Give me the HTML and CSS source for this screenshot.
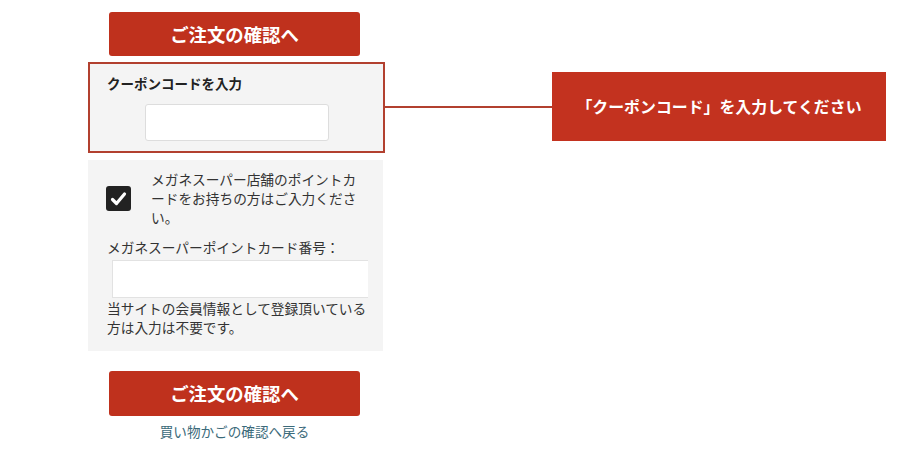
FILE: index.html
```html
<!DOCTYPE html>
<html lang="ja">
<head>
<meta charset="utf-8">
<link rel="stylesheet" href="styles.css">
</head>
<body>
<div class="page">
  <div class="column">
    <div class="btn-row"><button class="btn">ご注文の確認へ</button></div>
    <div class="coupon">
      <div class="coupon-label">クーポンコードを入力</div>
      <div class="coupon-input-row"><input class="coupon-input" type="text"></div>
      <div class="connector"></div>
      <div class="callout">「クーポンコード」を入力してください</div>
    </div>
    <div class="point">
      <div class="check-row">
        <span class="checkbox">
          <svg width="25" height="25" viewBox="0 0 25 25"><path d="M6.5 13.5 L10.5 17.5 L18.5 8" fill="none" stroke="#fff" stroke-width="3.2" stroke-linecap="round" stroke-linejoin="round"/></svg>
        </span>
        <span class="check-text">メガネスーパー店舗のポイントカードをお持ちの方はご入力ください。</span>
      </div>
      <div class="field-label">メガネスーパーポイントカード番号：</div>
      <div class="field-wrap"><input class="field-input" type="text"></div>
      <div class="note">当サイトの会員情報として登録頂いている方は入力は不要です。</div>
    </div>
    <div class="btn-row bottom"><button class="btn">ご注文の確認へ</button></div>
    <div class="back"><a href="#">買い物かごの確認へ戻る</a></div>
  </div>
</div>
</body>
</html>
```
FILE: styles.css
```css
html, body {
  margin: 0;
  padding: 0;
  background: #fff;
  font-family: "Noto Sans CJK JP", "Noto Sans", sans-serif;
  color: #222;
}
.page {
  width: 900px;
  height: 458px;
  overflow: hidden;
  padding-top: 12px;
  box-sizing: border-box;
}
.column {
  margin-left: 88px;
  width: 297px;
}
.btn-row {
  padding-left: 21px;
}
.btn {
  display: block;
  width: 251px;
  height: 44px;
  border: none;
  border-radius: 3px;
  background: #bf311d;
  color: #fff;
  font-family: "Noto Sans CJK JP", sans-serif;
  font-weight: 700;
  font-size: 18.4px;
  padding: 0;
  line-height: 44px;
}
.coupon {
  position: relative;
  margin-top: 6px;
  border: 2px solid #b2402f;
  background: #f4f4f4;
  padding: 10px 0 10px 17px;
}
.coupon-label {
  font-size: 13.5px;
  font-weight: 700;
  line-height: 19px;
  color: #222;
}
.coupon-input-row {
  margin-top: 11px;
  padding-left: 38px;
}
.coupon-input {
  display: block;
  box-sizing: border-box;
  width: 184px;
  height: 37px;
  border: 1px solid #ddd;
  border-radius: 3px;
  background: #fff;
  margin: 0;
}
.connector {
  position: absolute;
  left: 295px;
  top: 42px;
  width: 167px;
  height: 2px;
  background: #b2402f;
}
.callout {
  position: absolute;
  left: 462px;
  top: 8px;
  width: 334px;
  height: 69px;
  background: #c3321f;
  color: #fff;
  font-weight: 700;
  font-size: 15.9px;
  line-height: 69px;
  text-align: center;
}
.point {
  margin-top: 7px;
  width: 295px;
  background: #f4f4f4;
  padding: 10px 12px 14px 19px;
  box-sizing: border-box;
  font-size: 13.7px;
  line-height: 19px;
  color: #333;
}
.check-row {
  display: flex;
  align-items: center;
  gap: 20px;
}
.check-row .checkbox {
  flex: none;
  width: 25px;
  height: 25px;
  background: #222;
  border-radius: 3px;
  display: block;
  margin-left: -1px;
}
.checkbox svg { display: block; }
.check-text {
  width: 212px;
}
.field-label {
  margin-top: 11px;
}
.field-wrap {
  margin-top: 3px;
  padding-left: 5px;
}
.field-input {
  display: block;
  box-sizing: border-box;
  width: 256px;
  height: 38px;
  margin: 0;
  border: 1px solid #e2e2e2;
  border-right: none;
  background: #fff;
}
.note {
  margin-top: 1px;
}
.btn-row.bottom {
  margin-top: 20px;
}
.btn-row.bottom .btn {
  height: 45px;
  line-height: 45px;
}
.back {
  text-align: center;
  width: 293px;
  margin-top: 6px;
  font-size: 13.6px;
  line-height: 19px;
}
.back a {
  color: #3b6a7a;
  text-decoration: none;
}
```
